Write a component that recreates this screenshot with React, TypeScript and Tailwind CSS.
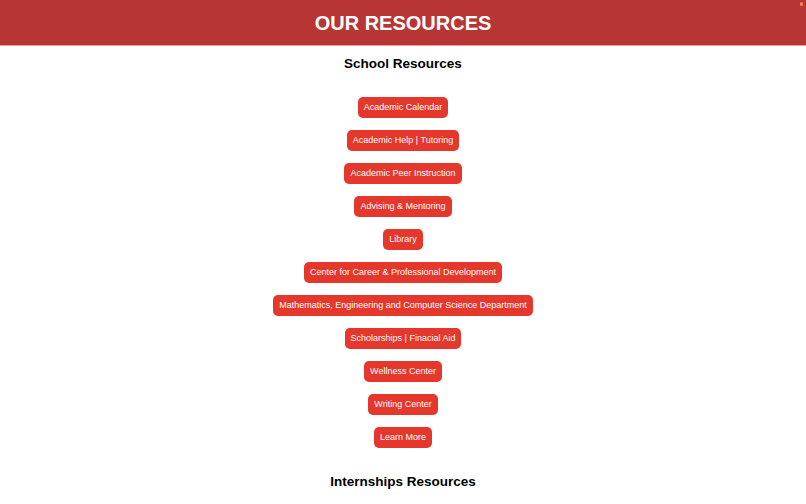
const schoolLinks = [
  "Academic Calendar",
  "Academic Help | Tutoring",
  "Academic Peer Instruction",
  "Advising & Mentoring",
  "Library",
  "Center for Career & Professional Development",
  "Mathematics, Engineering and Computer Science Department",
  "Scholarships | Finacial Aid",
  "Wellness Center",
  "Writing Center",
  "Learn More",
];

export default function App() {
  return (
    <div className="relative min-h-screen w-full bg-white font-['Liberation_Sans',Arial,sans-serif]">
      <span className="absolute right-[3px] top-[2px] h-[4px] w-[3px] rounded-sm bg-[#f08a3c]" />

      {/* Header */}
      <header className="flex h-[46px] items-center justify-center border-b border-[#e8a3a3] bg-[#b83535]">
        <h1 className="text-[20px] font-bold leading-none text-white">OUR RESOURCES</h1>
      </header>

      {/* School Resources */}
      <section className="flex flex-col items-center pt-[10px]">
        <h2 className="text-[13.5px] font-bold leading-[16px] text-black">School Resources</h2>
        <div className="mt-[25px] flex flex-col items-center gap-[12px]">
          {schoolLinks.map((label) => (
            <a
              key={label}
              href="#"
              className="flex h-[21px] items-center rounded-[5px] bg-[#e5372b] px-[6px] text-[9px] leading-none text-white"
            >
              {label}
            </a>
          ))}
        </div>
      </section>

      {/* Internships Resources */}
      <section className="flex flex-col items-center pt-[26px]">
        <h2 className="text-[13.5px] font-bold leading-[16px] text-black">Internships Resources</h2>
      </section>
    </div>
  );
}
